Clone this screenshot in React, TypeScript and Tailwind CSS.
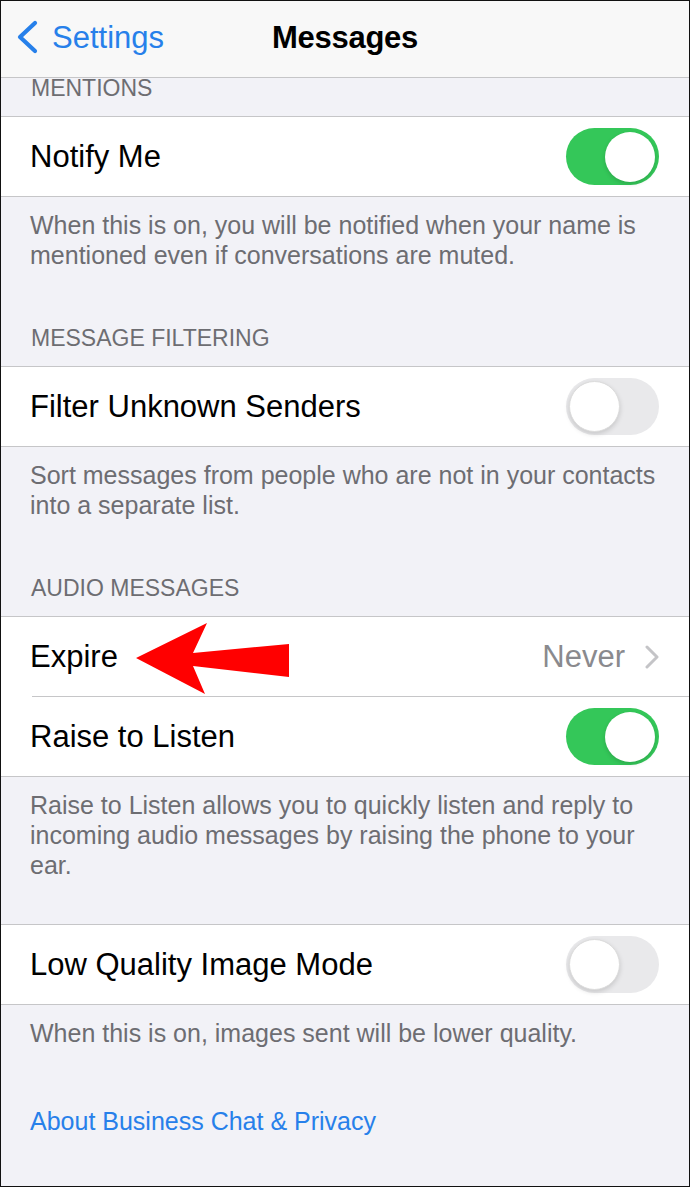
import React from "react";

const font = { fontFamily: '"Liberation Sans", Arial, sans-serif' };

function Toggle({ on }: { on: boolean }) {
  return on ? (
    <div className="relative w-[93px] h-[57px] rounded-full bg-[#34c759] shrink-0">
      <div className="absolute right-[4px] top-[3.5px] w-[50px] h-[50px] rounded-full bg-white shadow-[0_2px_4px_rgba(0,0,0,0.15)]" />
    </div>
  ) : (
    <div className="relative w-[93px] h-[57px] rounded-full bg-[#e9e9eb] shrink-0">
      <div className="absolute left-[3px] top-[3px] w-[51px] h-[51px] rounded-full bg-white border border-[#dcdcdc] shadow-[0_2px_5px_rgba(0,0,0,0.15)]" />
    </div>
  );
}

function Row({ label, children }: { label: string; children?: React.ReactNode }) {
  return (
    <div className="h-[79px] flex items-center justify-between pl-[29px] pr-[30px] bg-white">
      <span className="text-[31px] text-black leading-none">{label}</span>
      {children}
    </div>
  );
}

function Header({ text, first }: { text: string; first?: boolean }) {
  return (
    <div className={`${first ? "" : "mt-[58px]"} h-[38px] pl-[30px] text-[23px] leading-[21px] text-[#6d6d72] uppercase`}>
      {text}
    </div>
  );
}

function Footer({ children }: { children: React.ReactNode }) {
  return (
    <div className="pt-[13px] pl-[29px] pr-[28px] text-[25px] leading-[30px] text-[#6d6d72]">
      {children}
    </div>
  );
}

export default function App() {
  return (
    <div
      style={font}
      className="relative w-[690px] h-[1187px] overflow-hidden bg-[#f2f2f7] border border-[#111]"
    >
      {/* Nav bar */}
      <div className="relative h-[77px] bg-[#f8f8f8] border-b border-[#c6c6c8] flex items-center justify-center pb-[4px]">
        <div className="absolute left-[14px] top-0 h-full flex items-center pb-[4px]">
          <svg width="24" height="34" viewBox="0 0 24 34" className="mr-[13px]">
            <path d="M20 3 L5 17 L20 31" fill="none" stroke="#2780ea" strokeWidth="4.2" strokeLinecap="round" strokeLinejoin="round" />
          </svg>
          <span className="text-[31px] text-[#2780ea] leading-none">Settings</span>
        </div>
        <span className="text-[31px] font-bold text-black leading-none tracking-[-0.3px]">Messages</span>
      </div>

      <Header text="Mentions" first />
      <div className="border-y border-[#c6c6c8]">
        <Row label="Notify Me">
          <Toggle on />
        </Row>
      </div>
      <Footer>
        When this is on, you will be notified when your name is mentioned even if conversations are muted.
      </Footer>

      <Header text="Message Filtering" />
      <div className="border-y border-[#c6c6c8]">
        <Row label="Filter Unknown Senders">
          <Toggle on={false} />
        </Row>
      </div>
      <Footer>Sort messages from people who are not in your contacts into a separate list.</Footer>

      <Header text="Audio Messages" />
      <div className="border-y border-[#c6c6c8] bg-white">
        <Row label="Expire">
          <div className="flex items-center">
            <span className="text-[31px] text-[#8a8a8e] leading-none mr-[20px]">Never</span>
            <svg width="14" height="24" viewBox="0 0 14 24">
              <path d="M2 2 L12 12 L2 22" fill="none" stroke="#c4c4c7" strokeWidth="3" strokeLinecap="round" strokeLinejoin="round" />
            </svg>
          </div>
        </Row>
        <div className="ml-[31px] h-px bg-[#c6c6c8]" />
        <Row label="Raise to Listen">
          <Toggle on />
        </Row>
      </div>
      <Footer>
        Raise to Listen allows you to quickly listen and reply to incoming audio messages by raising the phone to your ear.
      </Footer>

      <div className="mt-[44px] border-y border-[#c6c6c8]">
        <Row label="Low Quality Image Mode">
          <Toggle on={false} />
        </Row>
      </div>
      <Footer>When this is on, images sent will be lower quality.</Footer>

      <div className="mt-[58px] pl-[29px] text-[25px] leading-[30px] text-[#2780ea]">
        About Business Chat &amp; Privacy
      </div>

      {/* Red annotation arrow */}
      <svg className="absolute left-0 top-0 pointer-events-none" width="690" height="1187" viewBox="0 0 690 1187">
        <polygon
          points="135,657 206,622 192,652 288,643 288,676 192,665 204,693"
          fill="#ff0000"
        />
      </svg>
    </div>
  );
}
